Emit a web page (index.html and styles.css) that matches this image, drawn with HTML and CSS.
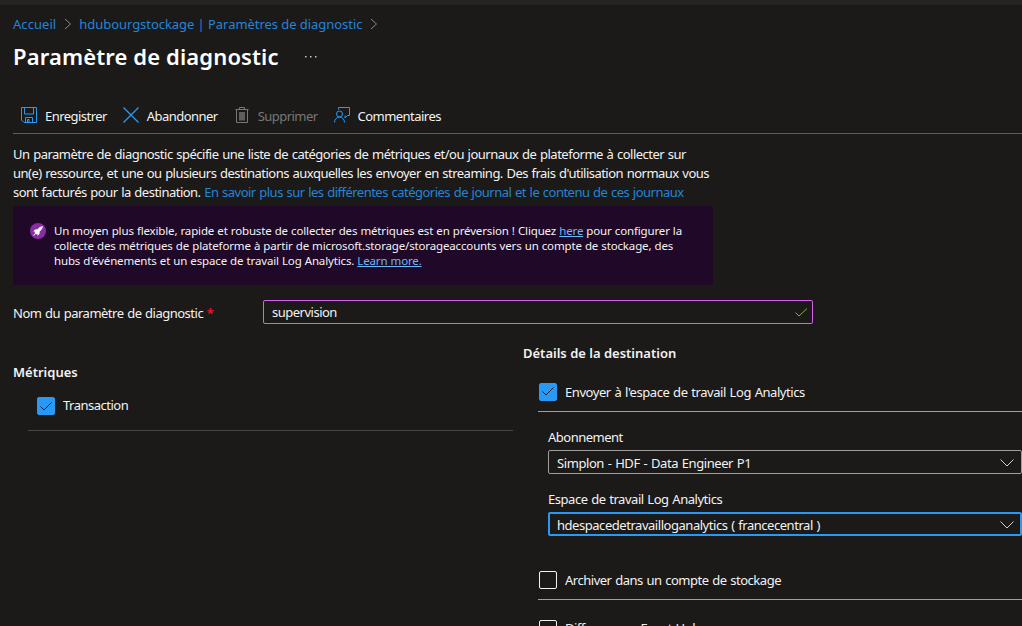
FILE: index.html
```html
<!DOCTYPE html>
<html lang="fr">
<head>
<meta charset="utf-8">
<title>Paramètre de diagnostic</title>
<link rel="stylesheet" href="styles.css">
</head>
<body>
<div class="topbar"></div>
<nav class="breadcrumb">
  <a class="crumb-home">Accueil</a>
  <svg class="crumb-sep" width="8" height="12" viewBox="0 0 8 12"><path d="M1 1 6.500 6 1 11"/></svg>
  <a class="crumb-page">hdubourgstockage | Paramètres de diagnostic</a>
  <svg class="crumb-sep" width="8" height="12" viewBox="0 0 8 12"><path d="M1 1 6.500 6 1 11"/></svg>
</nav>
<header class="title-row">
  <h1>Paramètre de diagnostic</h1>
  <svg class="more" width="12" height="2" viewBox="0 0 12 2"><path d="M0 0h1.500v1.500H0zM5 0h1.500v1.500H5zM10 0h1.500v1.500H10z"/></svg>
</header>
<div class="toolbar">
  <div class="tool save">
    <svg class="icon" width="16" height="16" viewBox="0 0 16 16"><path d="M.5.5h15v15H3L.5 13zM3.500.5v6.500h9V.5M4.500 15.500V10.500h7v5M6.500 15v-2.500h1.500V15"/></svg>
    <span>Enregistrer</span>
  </div>
  <div class="tool discard">
    <svg class="icon" width="16" height="16" viewBox="0 0 16 16"><path class="cross" d="M.5.5l15 15M15.500.5l-15 15"/></svg>
    <span>Abandonner</span>
  </div>
  <div class="tool delete">
    <svg class="icon" width="14" height="16" viewBox="0 0 14 16"><path d="M.5 2.500h13M4.500 2.500v-2h5v2M1.500 2.500v13h11v-13"/><path class="bin" d="M4 5h6v8.500H4z"/></svg>
    <span>Supprimer</span>
  </div>
  <div class="tool feedback">
    <svg class="icon" width="16" height="16" viewBox="0 0 16 16"><path d="M4.500 2.500v-2h11v8h-2l-2.500 2.500V8.500"/><circle cx="5.500" cy="7" r="3"/><path d="M.5 15.500c0-3 2.200-5.500 5-5.500s5 2.500 5 5.500"/></svg>
    <span>Commentaires</span>
  </div>
</div>
<p class="intro"><span class="i1">Un paramètre de diagnostic spécifie une liste de catégories de métriques et/ou journaux de plateforme à collecter sur</span><br><span class="i2">un(e) ressource, et une ou plusieurs destinations auxquelles les envoyer en streaming. Des frais d'utilisation normaux vous</span><br><span class="i3">sont facturés pour la destination. <a>En savoir plus sur les différentes catégories de journal et le contenu de ces journaux</a></span></p>
<aside class="banner">
  <svg class="rocket" width="16" height="16" viewBox="0 0 16 16"><circle cx="8" cy="8" r="8"/><path d="M13 3c-2.300.3-4 1.500-5.400 3.300L5 6.500 3.300 8.600l1.900.1-.7 1.300 1.500 1.500 1.300-.7.1 1.900 2.100-1.700.2-2.600C11.500 7 12.700 5.300 13 3zM4.200 10.700l-1.200 2.300 2.300-1.200z"/></svg>
  <p>Un moyen plus flexible, rapide et robuste de collecter des métriques est en préversion ! Cliquez <a>here</a> pour configurer la<br>collecte des métriques de plateforme à partir de microsoft.storage/storageaccounts vers un compte de stockage, des<br>hubs d'événements et un espace de travail Log Analytics. <a>Learn more.</a></p>
</aside>
<div class="name-row">
  <label>Nom du paramètre de diagnostic <b>*</b></label>
  <div class="name-input"><span>supervision</span>
    <svg width="13" height="9" viewBox="0 0 13 9"><path d="M.5 4.500l3.500 3.500L12 .5"/></svg>
  </div>
</div>
<main class="columns">
  <section class="metrics">
    <h2>Métriques</h2>
    <div class="check-row">
      <span class="box checked"><svg width="12" height="9" viewBox="0 0 12 9"><path d="M.5 4.500 4 8l7.500-7.500"/></svg></span>
      <span class="check-label">Transaction</span>
    </div>
  </section>
  <section class="destination">
    <h2>Détails de la destination</h2>
    <div class="check-row">
      <span class="box checked"><svg width="12" height="9" viewBox="0 0 12 9"><path d="M.5 4.500 4 8l7.500-7.500"/></svg></span>
      <span class="send">Envoyer à l'espace de travail Log Analytics</span>
    </div>
    <div class="fields">
      <label class="sub-label">Abonnement</label>
      <div class="select"><span class="sub">Simplon - HDF - Data Engineer P1</span><svg width="14" height="8" viewBox="0 0 14 8"><path d="M.5.5 7 7 13.500.5"/></svg></div>
      <label class="ws-label">Espace de travail Log Analytics</label>
      <div class="select focused"><span class="ws">hdespacedetravailloganalytics ( francecentral )</span><svg width="14" height="8" viewBox="0 0 14 8"><path d="M.5.5 7 7 13.500.5"/></svg></div>
    </div>
    <div class="check-row archive">
      <span class="box"></span>
      <span class="arch">Archiver dans un compte de stockage</span>
    </div>
    <div class="check-row hub">
      <span class="box"></span>
      <span>Diffuser vers Event Hub</span>
    </div>
  </section>
</main>
</body>
</html>
```
FILE: styles.css
```css
* { box-sizing: border-box; }
body { margin: 0; height: 626px; overflow: hidden; background: #1b1a19; color: #f3f2f1; font: 13px/19px "Noto Sans", sans-serif; letter-spacing: -0.5px; word-spacing: 0.75px; white-space: nowrap; }
p, h1, h2 { margin: 0; }
svg { fill: none; flex: none; }
.topbar { height: 5px; background: #252423; }
.breadcrumb { display: flex; align-items: center; height: 38px; padding-left: 13px; color: #2484d8; letter-spacing: 0; word-spacing: 0; }
.crumb-home { letter-spacing: 0.06px; }
.crumb-page { letter-spacing: -0.05px; }
.crumb-sep { stroke: #8a8886; margin: 0 7px 0 8px; }
.title-row { display: flex; align-items: center; height: 28px; padding-left: 13px; }
h1 { margin-top: -2px; font-size: 22px; line-height: 28px; font-weight: 600; letter-spacing: 0.13px; word-spacing: 0; color: #fff; }
.more { fill: #c8c6c4; margin-left: 26px; }
.toolbar { display: flex; align-items: center; height: 36px; margin: 27px 0 0 13px; padding-left: 8px; border-bottom: 1px solid #605e5c; letter-spacing: -0.54px; }
.tool { display: flex; align-items: center; gap: 8px; margin-right: 16px; }
.tool span { padding-top: 2px; }
.icon { stroke: #2899f5; margin-top: -2px; }
.cross { stroke-width: 1.3; }
.discard { margin-right: 17px; }
.delete { color: #797775; gap: 9px; }
.delete .icon { stroke: #797775; }
.bin { fill: #605e5c; stroke: none; }
.intro { margin: 11px 0 0 13px; height: 57px; }
.i1 { letter-spacing: -0.5px; }
.i2 { letter-spacing: -0.518px; }
.i3 { letter-spacing: -0.513px; }
.intro a { color: #2484d8; }
.banner { display: flex; width: 700px; height: 79px; margin: 4px 0 0 13px; padding: 17px 17px 0; background: #1f0828; border-radius: 2px; font-size: 11.500px; line-height: 15px; letter-spacing: -0.15px; word-spacing: 0.3px; }
.banner p { margin-left: 8px; }
.banner a { color: #6cb8f6; text-decoration: underline; }
.rocket circle { fill: #8a2da5; }
.rocket path { fill: #fff; }
.name-row { display: flex; margin: 15px 0 0 13px; height: 24px; }
.name-row label { width: 250px; line-height: 26px; letter-spacing: -0.5px; }
.name-row b { color: #e81123; }
.name-input { display: flex; justify-content: space-between; align-items: center; width: 550px; height: 24px; padding: 0 4px 0 8px; border: 1px solid #d75fee; border-radius: 2px; }
.name-input svg { stroke: #83b341; }
.columns { display: grid; grid-template-columns: 485px 499px; column-gap: 10px; height: 302px; overflow: hidden; padding-left: 28px; }
h2 { font-size: 13px; line-height: 19px; font-weight: 600; letter-spacing: 0; word-spacing: 0; }
.metrics { height: 107px; padding-top: 39px; border-bottom: 1px solid #484644; }
.columns { align-items: start; }
.metrics h2 { margin-left: -15px; }
.metrics .check-row { height: 48px; padding-left: 9px; }
.metrics .check-label { padding-bottom: 2px; }
.destination { padding-top: 20px; }
.check-row { display: flex; align-items: center; gap: 8px; }
.box { display: flex; align-items: center; justify-content: center; width: 18px; height: 18px; border: 1px solid #f3f2f1; border-radius: 2px; flex: none; }
.checked { background: #2899f5; border-color: #2899f5; }
.checked svg { stroke: #1b1a19; }
.destination .check-row { height: 40px; margin-left: 15px; padding-left: 1px; border-bottom: 1px solid #a19f9d; }
.destination h2 + .check-row { height: 49px; padding-top: 9px; }
.send { padding-top: 1px; letter-spacing: -0.437px; }
.fields { display: flex; flex-direction: column; padding: 16px 0 0 25px; }
.sub-label { letter-spacing: -0.5px; }
.sub { letter-spacing: -0.42px; }
.fields .ws-label { margin-top: 16px; letter-spacing: -0.465px; }
.select { display: flex; justify-content: space-between; align-items: center; height: 24px; margin-top: 3px; padding: 2px 7px 0 8px; border: 1px solid #a19f9d; border-radius: 2px; }
.select svg { stroke: #d2d0ce; }
.select.focused { border: 2px solid #2899f5; padding: 2px 6px 0 7px; }
.ws { letter-spacing: -0.46px; }
.destination .archive { margin-top: 24px; }
.arch { padding-top: 2px; letter-spacing: -0.48px; }
.destination .hub { height: 58px; }
```
